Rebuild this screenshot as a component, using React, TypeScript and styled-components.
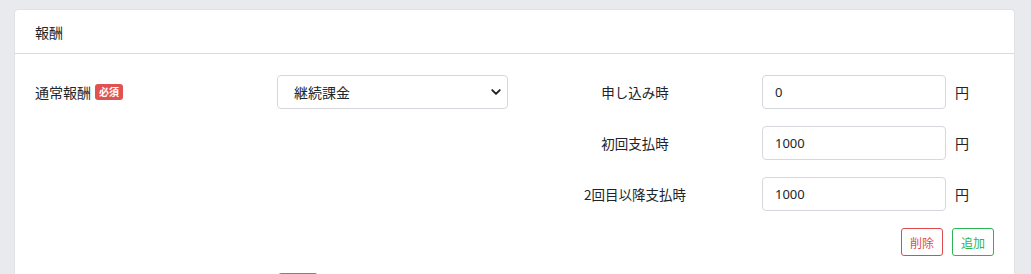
import { Fragment } from "react";
import { createGlobalStyle, styled } from "styled-components";

const GlobalStyle = createGlobalStyle`
    html, body {
        margin: 0;
        padding: 0;
        background: #e9eaed;
        font-family: "Noto Sans CJK JP", "Noto Sans", sans-serif;
        color: #212529;
    }
    body {
        height: 274px;
        overflow: hidden;
    }
`

const Page = styled.div`
    padding: 9px 16px 0 14px;
`

const Card = styled.div`
    background: #fff;
    border: 1px solid #e1e2e5;
    border-radius: 4px;
`

const CardHeader = styled.div`
    height: 43px;
    display: flex;
    align-items: center;
    padding: 0 20px;
    border-bottom: 1px solid #d9dadf;
    font-size: 14px;
`

const CardBody = styled.div`
    padding: 21px 20px 0 20px;
    display: flex;
    flex-direction: column;
    gap: 17px;
`

const FeeGrid = styled.div`
    display: grid;
    grid-template-columns: 242px 231px 254px 184px 1fr;
    grid-auto-rows: 34px;
    row-gap: 17px;
    align-items: center;
`

const FieldLabel = styled.div`
    display: flex;
    align-items: center;
    gap: 4px;
    font-size: 14px;
`

const Badge = styled.span`
    background: #e05252;
    color: #fff;
    font-size: 10px;
    font-weight: 700;
    padding: 0 4px;
    height: 16px;
    line-height: 16px;
    border-radius: 3px;
`

const SelectBox = styled.div`
    height: 34px;
    box-sizing: border-box;
    border: 1px solid #d7d8dd;
    border-radius: 4px;
    display: flex;
    align-items: center;
    justify-content: space-between;
    padding: 0 5px 0 16px;
    font-size: 14px;
`

const TimingLabel = styled.div`
    text-align: center;
    font-size: 13.5px;
`

const TextInput = styled.input`
    height: 34px;
    width: 100%;
    box-sizing: border-box;
    border: 1px solid #d7d8dd;
    border-radius: 4px;
    padding: 0 12px;
    font-family: "Noto Sans", sans-serif;
    font-size: 13px;
    color: #212529;
    outline: none;
`

const Unit = styled.span`
    padding-left: 9px;
    font-size: 14px;
`

const Actions = styled.div`
    display: flex;
    justify-content: flex-end;
    gap: 9px;
`

const OutlineButton = styled.button<{ $tone: "red" | "green" }>`
    height: 28px;
    width: 42px;
    padding: 0;
    background: #fff;
    border: 1px solid ${p => (p.$tone === "red" ? "#e04a4f" : "#2bb552")};
    color: ${p => (p.$tone === "red" ? "#e04a4f" : "#2bb552")};
    border-radius: 3px;
    font-family: "Noto Sans CJK JP", sans-serif;
    font-size: 12px;
`

const NextRow = styled.div`
    display: grid;
    grid-template-columns: 243px 40px;
`

const PeekButton = styled.div`
    height: 28px;
    border: 1px solid #2bb552;
    border-radius: 3px;
`

const rows = [
    { label: "申し込み時", value: "0" },
    { label: "初回支払時", value: "1000" },
    { label: "2回目以降支払時", value: "1000" },
]

export default function App() {
    return (
        <>
            <GlobalStyle />
            <Page>
                <Card>
                    <CardHeader>報酬</CardHeader>
                    <CardBody>
                        <FeeGrid>
                            {rows.map((row, i) => (
                                <Fragment key={row.label}>
                                    {i === 0 ? (
                                        <FieldLabel>
                                            通常報酬<Badge>必須</Badge>
                                        </FieldLabel>
                                    ) : <div />}
                                    {i === 0 ? (
                                        <SelectBox>
                                            <span>継続課金</span>
                                            <svg width="12" height="12" viewBox="0 0 16 16">
                                                <path d="M3 5.5l5 5 5-5" fill="none" stroke="#212529" strokeWidth="2.6" strokeLinecap="round" strokeLinejoin="round" />
                                            </svg>
                                        </SelectBox>
                                    ) : <div />}
                                    <TimingLabel>{row.label}</TimingLabel>
                                    <TextInput defaultValue={row.value} />
                                    <Unit>円</Unit>
                                </Fragment>
                            ))}
                        </FeeGrid>
                        <Actions>
                            <OutlineButton $tone="red">削除</OutlineButton>
                            <OutlineButton $tone="green">追加</OutlineButton>
                        </Actions>
                        <NextRow>
                            <div />
                            <PeekButton />
                        </NextRow>
                    </CardBody>
                </Card>
            </Page>
        </>
    )
}
